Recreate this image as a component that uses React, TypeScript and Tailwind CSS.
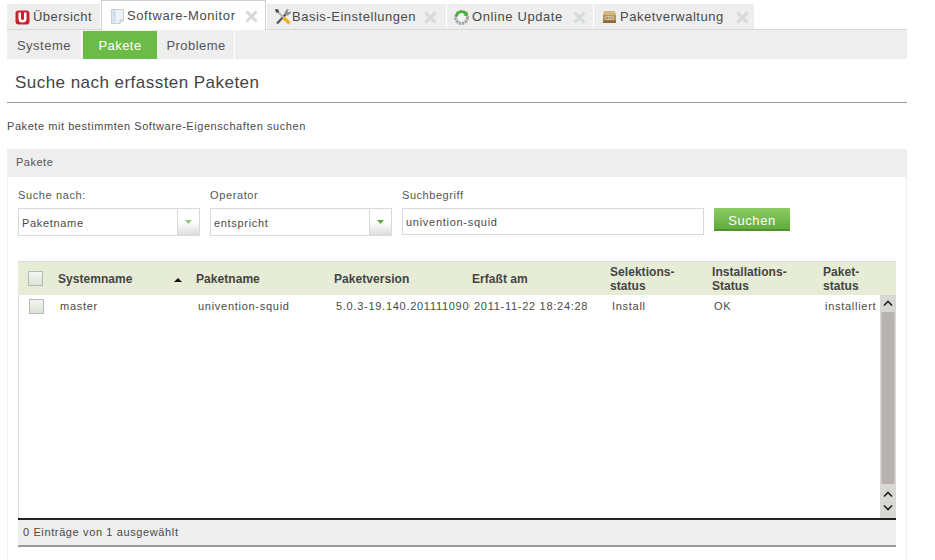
const font = "font-['Liberation_Sans',Arial,sans-serif]";

function CloseX() {
  return (
    <svg width="13" height="13" viewBox="0 0 13 13" className="shrink-0">
      <path d="M1.5 1.5 L11.5 11.5 M11.5 1.5 L1.5 11.5" stroke="#d5dad7" strokeWidth="3" />
    </svg>
  );
}

function LogoIcon() {
  return (
    <svg width="15" height="15" viewBox="0 0 15 15" className="shrink-0">
      <rect x="0.5" y="0.5" width="14" height="14" rx="3" fill="#c8202f" />
      <path d="M3.5 2.5 H6 V8.5 Q6 10 7.5 10 Q9 10 9 8.5 V2.5 H11.5 V9 Q11.5 12.5 7.5 12.5 Q3.5 12.5 3.5 9 Z" fill="#fff" />
    </svg>
  );
}

function DocIcon() {
  return (
    <svg width="15" height="17" viewBox="0 0 15 17" className="shrink-0">
      <path d="M1.5 1.5 H13.5 V12 L10 15.5 H1.5 Z" fill="#eef1f5" stroke="#c9ccd0" />
      <rect x="2.5" y="2.5" width="3" height="12" fill="#cfdcec" />
      <path d="M10 15.5 V12 H13.5" fill="#dcdcdc" stroke="#c9ccd0" />
    </svg>
  );
}

function ToolsIcon() {
  return (
    <svg width="18" height="18" viewBox="0 0 18 18" className="shrink-0">
      <path d="M3 15.5 L12.5 5.5" stroke="#55585b" strokeWidth="2.4" />
      <path d="M10.5 4.5 L13 1 L15 1.5 L13.5 3.5 L14.5 4.5 L16.5 3 L17 5 L14 7.5 L11.5 7 Z" fill="#8f9295" />
      <path d="M2.5 2.5 L10 10" stroke="#b5b8ba" strokeWidth="1.8" />
      <path d="M9.5 9.5 L15.5 15.5" stroke="#eeb11e" strokeWidth="3.2" />
      <path d="M1 1 L4.5 1.5 L5 4.5 L2 4.5 Z" fill="#45484b" />
    </svg>
  );
}

function UpdateIcon() {
  return (
    <svg width="17" height="17" viewBox="0 0 17 17" className="shrink-0">
      <circle cx="8.5" cy="8.5" r="6" fill="none" stroke="#a3a6a8" strokeWidth="3" strokeDasharray="2.4 0.8" />
      <circle cx="8.5" cy="8.5" r="3.2" fill="#f3f4f4" />
      <path d="M3.6 7.5 A5 5 0 0 1 12.5 4.5" fill="none" stroke="#46b03a" strokeWidth="2.6" />
      <path d="M10.5 6.5 L15 7 L14 2 Z" fill="#46b03a" />
    </svg>
  );
}

function BoxIcon() {
  return (
    <svg width="15" height="14" viewBox="0 0 15 14" className="shrink-0">
      <path d="M2.5 1 H12.5 L14 5 V13 H1 V5 Z" fill="#b9935a" />
      <path d="M2.5 1 H12.5 L14 5 H1 Z" fill="#d5b77e" />
      <rect x="1" y="10.5" width="13" height="2.5" fill="#8c6b3a" />
      <rect x="3.5" y="6.5" width="8" height="3" fill="#efe6d2" />
      <path d="M4 8 H11" stroke="#4a3c24" strokeWidth="1.2" strokeDasharray="2 0.7" />
    </svg>
  );
}

function Tab({ w, icon, label, close = true, active = false, pl, gap, closeGap, tracking = "tracking-[0.45px]" }: { w: string; icon: React.ReactNode; label: string; close?: boolean; active?: boolean; pl: string; gap: string; closeGap: string; tracking?: string }) {
  return (
    <div
      className={`flex items-center ${w} ${pl} ${gap} ${
        active
          ? "h-[30px] mb-[-1px] border border-b-0 border-[#cfcfcf] bg-white relative z-10 pt-[1px]"
          : "h-[25px] bg-[#eeeeee] pt-[1px]"
      }`}
    >
      {icon}
      <span className={`text-[13px] ${tracking} text-[#4a4a4a] whitespace-nowrap`}>{label}</span>
      {close && <span className={closeGap}><CloseX /></span>}
    </div>
  );
}

function SelectBox({ w, label, value, arrowDark }: { w: string; label: string; value: string; arrowDark?: boolean }) {
  return (
    <div className={`flex flex-col ${w}`}>
      <div className="text-[11px] tracking-[0.62px] text-[#555] h-[21px] leading-[14px]">{label}</div>
      <div className="flex h-[28px] w-full border border-[#d3dadf] bg-white mt-[-1px]">
        <div className="flex-1 pl-[3px] pt-[7px] text-[11px] leading-[14px] tracking-[0.68px] text-[#4a4a4a]">{value}</div>
        <div className="w-[22px] border-l border-[#d5d9dc] bg-gradient-to-b from-white via-white to-[#dcdcdc] flex items-center justify-center">
          <svg width="7" height="4" viewBox="0 0 7 4"><path d="M0 0 H7 L3.5 4 Z" fill={arrowDark ? "#5fa83f" : "#96c77f"} /></svg>
        </div>
      </div>
    </div>
  );
}

function Check() {
  return (
    <div className="w-[15px] h-[15px] border border-[#b5bab5] bg-gradient-to-b from-[#f3f5f1] to-[#dbe4d8]" />
  );
}

function Arrow({ down }: { down?: boolean }) {
  return (
    <svg width="10" height="7" viewBox="0 0 10 7">
      <path d={down ? "M1 1.5 L5 5.5 L9 1.5" : "M1 5.5 L5 1.5 L9 5.5"} fill="none" stroke="#222" strokeWidth="1.7" />
    </svg>
  );
}

const cols = "grid grid-cols-[40px_138px_138px_138px_138px_102px_111px_57px]";

function Head({ children }: { children: React.ReactNode }) {
  return <div className="text-[12px] leading-[14px] font-bold tracking-[0.05px] text-[#444] self-center">{children}</div>;
}

function Cell({ children }: { children: React.ReactNode }) {
  return <div className="pl-[2px] overflow-hidden whitespace-nowrap text-[11px] leading-[14px] tracking-[0.72px] text-[#4a4a4a] pt-[4px] mr-[2px]">{children}</div>;
}

export default function App() {
  return (
    <div className={`${font} w-[935px] h-[560px] overflow-hidden bg-white pl-[7px] pt-[1px]`}>
      <div className="w-[900px]">
        <div className="flex items-end gap-[1px] h-[29px] border-b border-[#d8d8d8]">
          <Tab w="w-[93px]" pl="pl-[8px]" gap="gap-[3px]" closeGap="" icon={<LogoIcon />} label="Übersicht" close={false} />
          <Tab w="w-[165px]" pl="pl-[8px]" gap="gap-[2px]" closeGap="ml-[7px]" tracking="tracking-[0.6px]" icon={<DocIcon />} label="Software-Monitor" active />
          <Tab w="w-[179px]" pl="pl-[7px]" gap="gap-[0px]" closeGap="ml-[8px]" tracking="tracking-[0.52px]" icon={<ToolsIcon />} label="Basis-Einstellungen" />
          <Tab w="w-[146px]" pl="pl-[6px]" gap="gap-[2px]" closeGap="ml-[8px]" tracking="tracking-[0.6px]" icon={<UpdateIcon />} label="Online Update" />
          <Tab w="w-[160px]" pl="pl-[8px]" gap="gap-[3px]" closeGap="ml-[9px]" tracking="tracking-[0.5px]" icon={<BoxIcon />} label="Paketverwaltung" />
        </div>
        <div className="flex h-[29px] bg-[#eeeeee] gap-[1px]">
          <div className="w-[75px] pt-[3px] flex items-center justify-center text-[13px] tracking-[0.5px] text-[#555] border-r border-white">Systeme</div>
          <div className="w-[74px] h-[28px] mt-[1px] pt-[2px] bg-[#6cba47] flex items-center justify-center text-[13px] tracking-[0.45px] text-white">Pakete</div>
          <div className="w-[77px] pt-[3px] flex items-center justify-center text-[13px] tracking-[0.45px] text-[#555] border-r border-white">Probleme</div>
        </div>
        <div className="h-[44px] border-b border-[#999] pl-[8px] pt-[14px] text-[17px] leading-[20px] tracking-[0.46px] text-[#444]">
          Suche nach erfassten Paketen
        </div>
        <div className="h-[46px] pt-[16px] text-[11px] leading-[14px] tracking-[0.56px] text-[#4a4a4a]">
          Pakete mit bestimmten Software-Eigenschaften suchen
        </div>
        <div className="border-x border-[#eeeeee] h-[420px]">
          <div className="h-[28px] bg-[#eeeeee] pl-[8px] pt-[6px] text-[11px] leading-[14px] tracking-[0.5px] text-[#555]">Pakete</div>
          <div className="pl-[10px] pt-[11px] pr-[10px]">
            <div className="flex items-start h-[73px]">
              <SelectBox w="w-[182px]" label="Suche nach:" value="Paketname" />
              <div className="w-[10px]" />
              <SelectBox w="w-[182px]" label="Operator" value="entspricht" arrowDark />
              <div className="w-[10px]" />
              <div className="flex flex-col w-[302px]">
                <div className="text-[11px] tracking-[0.55px] text-[#555] h-[21px] leading-[14px]">Suchbegriff</div>
                <div className="h-[27px] border border-[#d3dadf] mt-[-1px] pl-[3px] pt-[6px] text-[11px] leading-[14px] tracking-[0.72px] text-[#4a4a4a]">univention-squid</div>
              </div>
              <div className="ml-[10px] mt-[20px] w-[76px] h-[23px] pt-[4px] bg-gradient-to-b from-[#8ccb62] to-[#62ad3e] border-b-2 border-[#4f9330] flex items-center justify-center text-[13px] tracking-[0.55px] text-white">Suchen</div>
            </div>
            <div className="w-[878px]">
              <div className="border border-[#dcdcdc] border-b-0">
                <div className={`${cols} h-[33px] bg-[#e6ecd6] ml-[-1px] w-[878px]`}>
                  <div className="pl-[10px] self-center"><Check /></div>
                  <div className="flex items-center self-center">
                    <Head>Systemname</Head>
                    <svg width="8" height="4" viewBox="0 0 8 4" className="ml-[41px] mt-[3px]"><path d="M0 4 H8 L4 0 Z" fill="#111" /></svg>
                  </div>
                  <Head>Paketname</Head>
                  <Head>Paketversion</Head>
                  <Head>Erfaßt am</Head>
                  <Head>Selektions-<br />status</Head>
                  <Head>Installations-<br />Status</Head>
                  <Head>Paket-<br />status</Head>
                </div>
                <div className="flex h-[223px] ml-[-1px] w-[878px]">
                  <div className="flex-1 min-w-0">
                    <div className={`${cols} h-[22px]`}>
                      <div className="pl-[11px] pt-[4px]"><Check /></div>
                      <Cell>master</Cell>
                      <Cell>univention-squid</Cell>
                      <Cell>5.0.3-19.140.201111090000</Cell>
                      <Cell>2011-11-22 18:24:28</Cell>
                      <Cell>Install</Cell>
                      <Cell>OK</Cell>
                      <Cell>installiert</Cell>
                    </div>
                  </div>
                  <div className="w-[16px] shrink-0 bg-[#d8d8d3] flex flex-col items-center">
                    <div className="w-full h-[17px] flex items-center justify-center"><Arrow /></div>
                    <div className="w-[14px] h-[172px] bg-[#b7b1b1] rounded-[2px] border-x border-[#c4c0c0]" />
                    <div className="mt-[4px] h-[12px] flex items-center"><Arrow /></div>
                    <div className="mt-[1px] h-[12px] flex items-center"><Arrow down /></div>
                  </div>
                </div>
              </div>
              <div className="h-[29px] border-t-2 border-[#222] border-b-2 border-b-[#999] bg-[#eeeeee] pl-[5px] pt-[5px] text-[11px] leading-[14px] tracking-[0.62px] text-[#4a4a4a]">
                0 Einträge von 1 ausgewählt
              </div>
            </div>
          </div>
        </div>
      </div>
    </div>
  );
}
